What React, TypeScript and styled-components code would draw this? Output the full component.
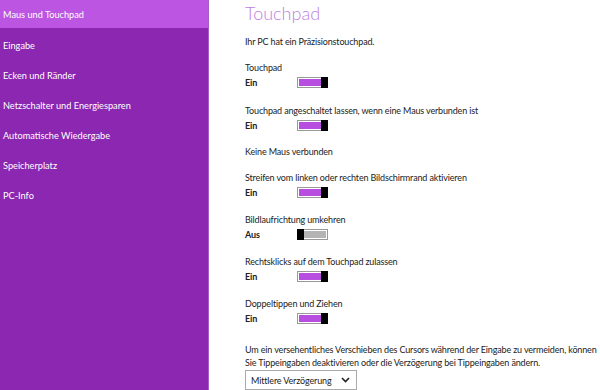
import React from 'react';
import styled, { createGlobalStyle } from 'styled-components';

const GlobalStyle = createGlobalStyle`
  html, body { margin: 0; padding: 0; background: #fff; }
  body { font-family: Lato, 'Open Sans', sans-serif; }
`;

const Page = styled.div`
  display: flex;
  width: 600px;
  height: 390px;
  overflow: hidden;
`;

const Sidebar = styled.nav`
  width: 208px;
  flex-shrink: 0;
  background: #8b27b0;
  border-right: 1px solid #a65cc6;
  display: flex;
  flex-direction: column;
`;

const NavItem = styled.div<{ active?: boolean }>`
  height: ${p => (p.active ? '28px' : '30px')};
  margin-bottom: ${p => (p.active ? '2px' : '0')};
  padding-left: 3px;
  display: flex;
  align-items: center;
  background: ${p => (p.active ? '#bb55e2' : 'transparent')};
  color: #fff;
  font-size: 9.2px;
`;

const Content = styled.main`
  flex: 1;
  padding-left: 36px;
  color: #222;
  font-size: 9px;
  letter-spacing: -0.15px;
`;

const Title = styled.h1`
  margin: 1px 0 0 0;
  font-weight: 300;
  font-size: 18px;
  letter-spacing: 0;
  color: #c07edf;
  line-height: 24px;
`;

const Line = styled.div<{ top?: number }>`
  margin-top: ${p => p.top ?? 0}px;
  line-height: 13px;
  white-space: nowrap;
`;

const ValueRow = styled.div`
  display: flex;
  align-items: center;
  margin-top: 2px;
  height: 13px;
`;

const Value = styled.span`
  width: 52px;
  font-weight: 700;
`;

const Toggle = styled.div<{ on?: boolean }>`
  width: 29px;
  height: 9px;
  border: 1px solid #999;
  display: flex;
  background: ${p => (p.on ? '#b84ee0' : '#b4b4b4')};
  box-shadow: inset 0 0 0 1px #fff;
  justify-content: ${p => (p.on ? 'flex-end' : 'flex-start')};
`;

const Thumb = styled.div<{ on?: boolean }>`
  width: 7px;
  height: 11px;
  margin: ${p => (p.on ? '-1px -1px 0 0' : '-1px 0 0 -1px')};
  background: #000;
`;

const Select = styled.div`
  margin-top: 1px;
  width: 112px;
  height: 20px;
  border: 1px solid #aaa;
  display: flex;
  align-items: center;
  justify-content: space-between;
  padding: 0 6px 0 5px;
  box-sizing: border-box;
`;

const items = [
  'Maus und Touchpad',
  'Eingabe',
  'Ecken und Ränder',
  'Netzschalter und Energiesparen',
  'Automatische Wiedergabe',
  'Speicherplatz',
  'PC-Info',
];

const Switch = ({ on }: { on: boolean }) => (
  <Toggle on={on}>
    <Thumb on={on} />
  </Toggle>
);

const Setting = ({ label, on, top }: { label: string; on: boolean; top: number }) => (
  <>
    <Line top={top}>{label}</Line>
    <ValueRow>
      <Value>{on ? 'Ein' : 'Aus'}</Value>
      <Switch on={on} />
    </ValueRow>
  </>
);

export default function App() {
  return (
    <Page>
      <GlobalStyle />
      <Sidebar>
        {items.map((t, i) => (
          <NavItem key={t} active={i === 0}>{t}</NavItem>
        ))}
      </Sidebar>
      <Content>
        <Title>Touchpad</Title>
        <Line top={10}>Ihr PC hat ein Präzisionstouchpad.</Line>
        <Setting label="Touchpad" on top={13} />
        <Setting label="Touchpad angeschaltet lassen, wenn eine Maus verbunden ist" on top={15} />
        <Line top={13}>Keine Maus verbunden</Line>
        <Setting label="Streifen vom linken oder rechten Bildschirmrand aktivieren" on top={13} />
        <Setting label="Bildlaufrichtung umkehren" on={false} top={14} />
        <Setting label="Rechtsklicks auf dem Touchpad zulassen" on top={14} />
        <Setting label="Doppeltippen und Ziehen" on top={14} />
        <Line top={18}>
          Um ein versehentliches Verschieben des Cursors während der Eingabe zu vermeiden, können
          <br />
          Sie Tippeingaben deaktivieren oder die Verzögerung bei Tippeingaben ändern.
        </Line>
        <Select>
          <span>Mittlere Verzögerung</span>
          <svg width="9" height="6" viewBox="0 0 9 6">
            <path d="M1 1 L4.5 4.5 L8 1" fill="none" stroke="#222" strokeWidth="1.6" />
          </svg>
        </Select>
      </Content>
    </Page>
  );
}
